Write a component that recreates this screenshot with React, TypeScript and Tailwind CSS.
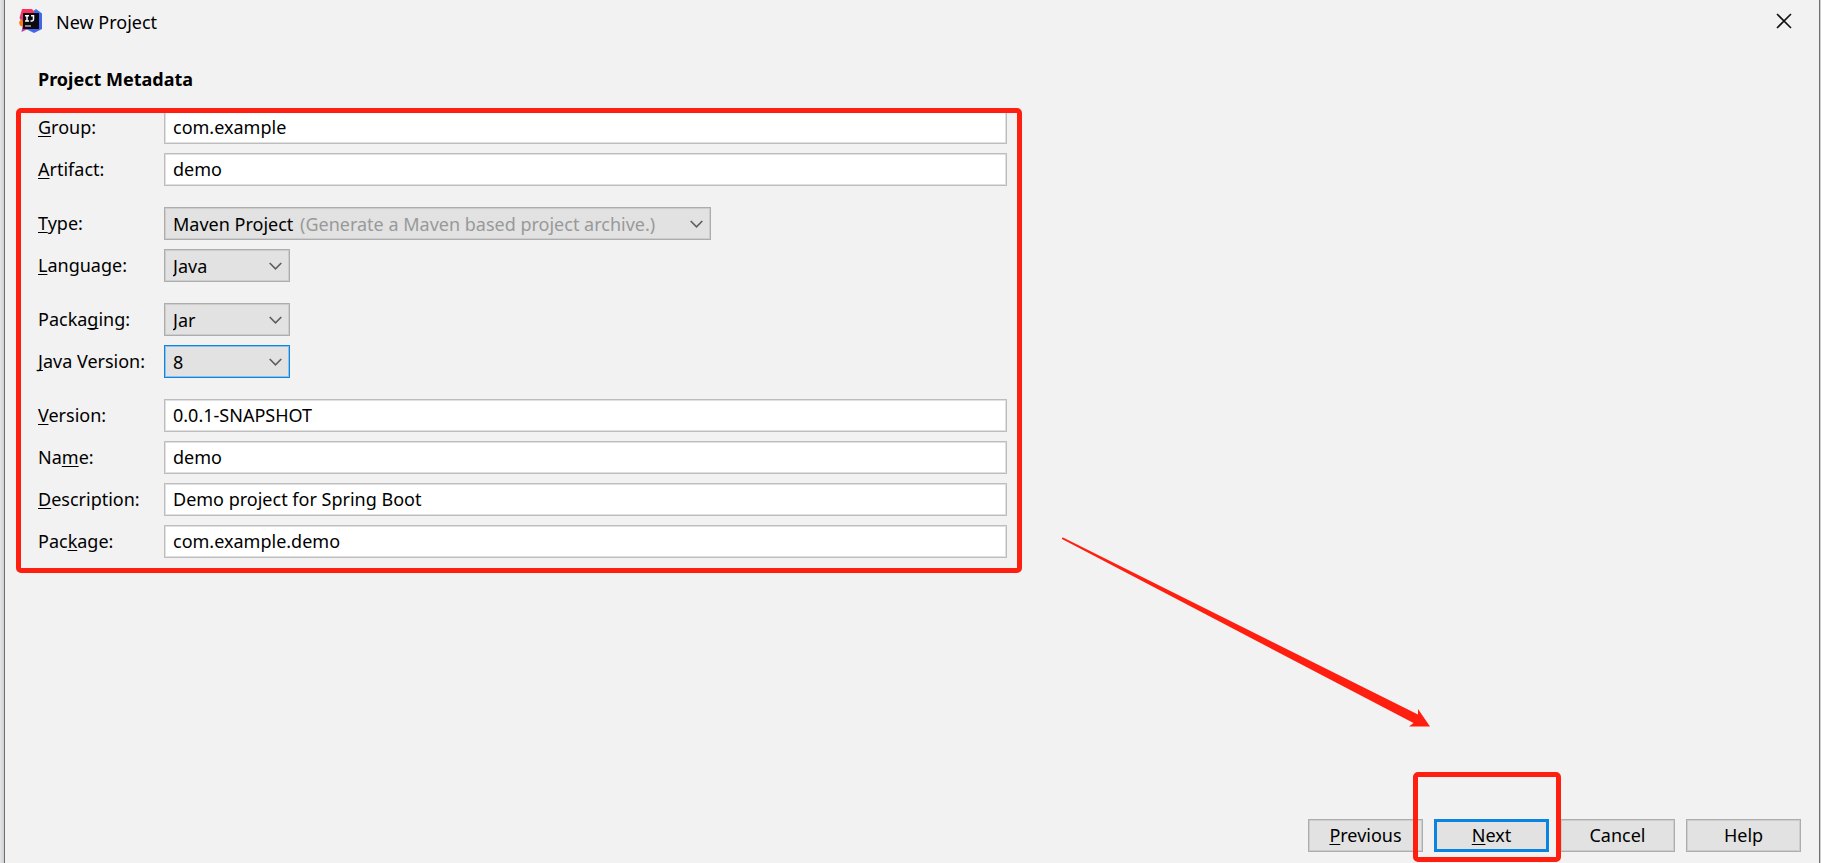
import React, { useState } from 'react';
import { clsx } from 'clsx';

type Choice = {
  value: string;
  hint?: string;
};

// "&" marks the letter that gets the keyboard mnemonic
const Mnemonic = ({ text }: { text: string }) => {
  const i = text.indexOf('&');
  if (i < 0) return <>{text}</>;
  return (
    <>
      {text.slice(0, i)}
      <u className="underline decoration-1 underline-offset-2 [text-decoration-skip-ink:none]">{text[i + 1]}</u>
      {text.slice(i + 2)}
    </>
  );
};

const TextRow = ({ id, label, value }: { id: string; label: string; value: string }) => {
  const [text, setText] = useState(value);
  return (
    <div className="flex items-center">
      <label htmlFor={id} className="w-[126px] flex-shrink-0 pb-0.5">
        <Mnemonic text={label} />
      </label>
      <input
        id={id}
        type="text"
        value={text}
        onChange={(e) => setText(e.target.value)}
        className="h-[33px] min-w-0 flex-grow border border-[#bdbdbd] bg-white px-2 pb-0.5 shadow-[inset_0_0_0_1px_#e0e0e0] outline-none"
      />
    </div>
  );
};

const SelectRow = ({
  id,
  label,
  choices,
  wide,
  focused,
}: {
  id: string;
  label: string;
  choices: Choice[];
  wide?: boolean;
  focused?: boolean;
}) => {
  const [value, setValue] = useState(choices[0].value);
  const hint = choices.find((c) => c.value === value)?.hint;
  return (
    <div className="flex items-center">
      <label htmlFor={id} className="w-[126px] flex-shrink-0 pb-0.5">
        <Mnemonic text={label} />
      </label>
      <div
        className={clsx(
          'flex h-[33px] items-center border bg-[#e2e2e2] pr-[7px] pl-2',
          wide ? 'w-[547px]' : 'w-[126px]',
          focused
            ? 'border-[#0f85de] shadow-[inset_0_0_0_1px_#8cc1ec]'
            : 'border-[#adadad] shadow-[inset_0_0_0_1px_#cdcdcd]'
        )}
      >
        <select
          id={id}
          value={value}
          onChange={(e) => setValue(e.target.value)}
          className={clsx('appearance-none bg-transparent outline-none', !hint && 'min-w-0 flex-grow')}
        >
          {choices.map((c) => (
            <option key={c.value}>{c.value}</option>
          ))}
        </select>
        {hint ? <span className="ml-[6px] flex-grow whitespace-nowrap text-[#999999]">{hint}</span> : null}
        <svg className="pointer-events-none h-2 w-[13px] flex-shrink-0" viewBox="0 0 13 8" fill="none">
          <path d="M.7 1 6.5 6.8 12.3 1" stroke="#5f5f5f" strokeWidth="1.7" />
        </svg>
      </div>
    </div>
  );
};

const Logo = () => (
  <svg className="h-6 w-6 flex-shrink-0" viewBox="0 0 24 24">
    <defs>
      <linearGradient id="blue" x1="0" y1="0" x2="1" y2="1">
        <stop offset="0" stopColor="#2d7ff0" />
        <stop offset="1" stopColor="#4b5be8" />
      </linearGradient>
      <linearGradient id="pink" x1="1" y1="0" x2="0" y2="1">
        <stop offset="0" stopColor="#fe315d" />
        <stop offset=".5" stopColor="#f9355f" />
        <stop offset="1" stopColor="#a23cd0" />
      </linearGradient>
    </defs>
    <path d="M13 3 17 0l6 4.500V20L15 24l-8-4z" fill="url(#blue)" />
    <path d="M3 0h10l4 5-6 14-8.500 4 1.500-9-3.500-5z" fill="url(#pink)" />
    <path d="M0 13.500 2 10l3 3-1 5-3-1.500z" fill="#f97a12" />
    <rect x="4" y="4" width="16" height="16" fill="#0b0a10" />
    <path
      d="M6 6.700h4M8 6.700v5.200M6 11.900h4M12 6.700h2.500v3.600q0 1.600-1.600 1.600h-1.400"
      stroke="#fff"
      strokeWidth="1.500"
      fill="none"
    />
    <path d="M6 17h6" stroke="#d8d8d8" strokeWidth="1.200" />
  </svg>
);

const DialogButton = ({ label, primary }: { label: string; primary?: boolean }) => (
  <button
    type="button"
    className={clsx(
      'flex h-[33px] w-[115px] items-center justify-center bg-[#e2e2e2] pb-0.5',
      primary ? 'border-3 border-[#0a84e0]' : 'border border-[#adadad] shadow-[inset_0_0_0_1px_#cdcdcd]'
    )}
  >
    <span>
      <Mnemonic text={label} />
    </span>
  </button>
);

const App = () => {
  return (
    <div className="flex min-h-screen bg-[#f2f2f2] font-['Noto_Sans','Open_Sans',sans-serif] text-[18px] leading-6 text-black">
      <div className="w-1 flex-shrink-0 bg-gradient-to-r from-[#e4e5e6] to-[#cfd0d1]" />
      <div className="relative flex min-w-0 flex-grow flex-col border-x border-[#6f6f6f]">
        <header className="flex h-[42px] items-center pr-[27px] pl-[14px]">
          <Logo />
          <h1 className="ml-[13px] flex-grow pt-0.5">New Project</h1>
          <button type="button" aria-label="Close">
            <svg className="h-4 w-4" viewBox="0 0 16 16" fill="none">
              <path d="M1 1 15 15M15 1 1 15" stroke="#111" strokeWidth="1.600" />
            </svg>
          </button>
        </header>

        <main className="px-[33px] pt-[25px]">
          <h2 className="font-bold">Project Metadata</h2>
          <form className="relative mt-5 flex max-w-[969px] flex-col gap-[21px]">
            <div className="flex flex-col gap-[9px]">
              <TextRow id="group" label="&Group:" value="com.example" />
              <TextRow id="artifact" label="&Artifact:" value="demo" />
            </div>
            <div className="flex flex-col gap-[9px]">
              <SelectRow
                id="type"
                label="&Type:"
                wide
                choices={[{ value: 'Maven Project', hint: '(Generate a Maven based project archive.)' }]}
              />
              <SelectRow id="language" label="&Language:" choices={[{ value: 'Java' }]} />
            </div>
            <div className="flex flex-col gap-[9px]">
              <SelectRow id="packaging" label="Packa&ging:" choices={[{ value: 'Jar' }]} />
              <SelectRow id="java-version" label="&Java Version:" focused choices={[{ value: '8' }]} />
            </div>
            <div className="flex flex-col gap-[9px]">
              <TextRow id="version" label="&Version:" value="0.0.1-SNAPSHOT" />
              <TextRow id="name" label="Na&me:" value="demo" />
              <TextRow id="description" label="&Description:" value="Demo project for Spring Boot" />
              <TextRow id="package" label="Pac&kage:" value="com.example.demo" />
            </div>
            {/* marker around the fields */}
            <div className="pointer-events-none absolute -top-[3px] -right-[15px] -bottom-[15px] -left-[22px] rounded-[5px] border-5 border-[#ff1f10]" />
          </form>
        </main>

        <footer className="mt-auto flex justify-end gap-[11px] pr-[18px] pb-[11px]">
          <DialogButton label="&Previous" />
          <DialogButton label="&Next" primary />
          <DialogButton label="Cancel" />
          <DialogButton label="Help" />
        </footer>

        {/* arrow and marker pointing at Next */}
        <svg
          className="pointer-events-none absolute right-[389px] bottom-[136px] h-[190px] w-[368px]"
          viewBox="0 0 368 190"
        >
          <path d="M0 1 1 .5 356 177.500V172L368 189.500H347L351.500 186 0 2z" fill="#ff1f10" />
        </svg>
        <div className="pointer-events-none absolute right-[258px] bottom-px h-[90px] w-[148px] rounded-[5px] border-5 border-[#ff1f10]" />
      </div>
      <div className="w-px flex-shrink-0 bg-[#d0d0d0]" />
    </div>
  );
};

export default App;
